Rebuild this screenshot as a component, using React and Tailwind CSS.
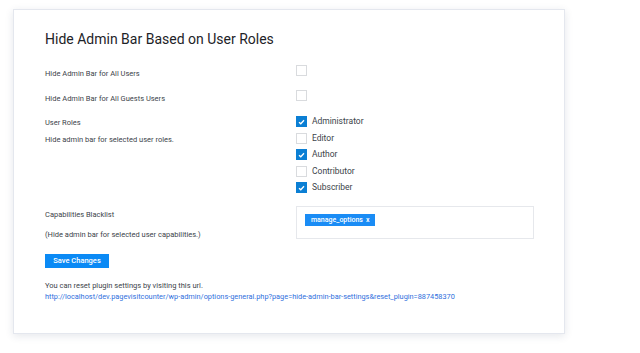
import React from "react";

const roles = [
  { name: "Administrator", checked: true },
  { name: "Editor", checked: false },
  { name: "Author", checked: true },
  { name: "Contributor", checked: false },
  { name: "Subscriber", checked: true },
];

const Box = ({ checked }) =>
  checked ? (
    <span className="w-[11px] h-[11px] bg-[#0b7fd4] flex items-center justify-center shrink-0">
      <svg width="7" height="6" viewBox="0 0 7 6">
        <path d="M1 3.2 L2.8 4.8 L6 1.2" fill="none" stroke="#fff" strokeWidth="1.3" />
      </svg>
    </span>
  ) : (
    <span className="w-[11px] h-[11px] border border-[#d9dbde] bg-white shrink-0" />
  );

const App = () => {
  return (
    <div className="w-[640px] h-[353px] bg-white pt-[9px] pl-[13px] font-['Roboto',sans-serif]">
      <div className="w-[552px] h-[325px] border border-[#e4e7ee] shadow-[0_2px_8px_rgba(40,60,90,0.12)] bg-white pl-[31px] pt-[20px]">
        <h1 className="text-[14px] leading-[18px] font-normal text-[#1d2327]">Hide Admin Bar Based on User Roles</h1>

        <div className="flex mt-[17px] h-[12px]">
          <div className="w-[251px] text-[7.5px] leading-[12px] text-[#3c434a] pt-[3px]">Hide Admin Bar for All Users</div>
          <Box checked={false} />
        </div>

        <div className="flex mt-[13px] h-[12px]">
          <div className="w-[251px] text-[7.5px] leading-[12px] text-[#3c434a] pt-[3px]">Hide Admin Bar for All Guests Users</div>
          <Box checked={false} />
        </div>

        <div className="flex mt-[14px]">
          <div className="w-[251px] text-[7.5px] leading-[12px] text-[#3c434a]">
            <div className="mt-[1px]">User Roles</div>
            <div className="mt-[5px]">Hide admin bar for selected user roles.</div>
          </div>
          <div className="flex flex-col gap-[5.5px]">
            {roles.map((r) => (
              <div key={r.name} className="flex items-center h-[11px]">
                <Box checked={r.checked} />
                <span className="ml-[5px] text-[8.5px] leading-[11px] text-[#3c434a]">{r.name}</span>
              </div>
            ))}
          </div>
        </div>

        <div className="flex mt-[13px]">
          <div className="w-[251px] text-[7.5px] leading-[12px] text-[#3c434a]">
            <div className="mt-[3px]">Capabilities Blacklist</div>
            <div className="mt-[8px]">(Hide admin bar for selected user capabilities.)</div>
          </div>
          <div className="w-[238px] h-[33px] border border-[#e6e8ec] pl-[8px] pt-[7px] flex items-start">
            <span className="flex items-center h-[12px] px-[6px] bg-[#1a8cf5] text-white text-[7px] font-medium leading-[12px]">
              manage_options <span className="ml-[3px]">x</span>
            </span>
          </div>
        </div>

        <button
          type="button"
          className="mt-[13px] w-[64px] h-[14px] bg-[#0b8af5] text-white text-[7.5px] font-medium leading-[14px] block"
        >
          Save Changes
        </button>

        <div className="mt-[12px] text-[7.5px] leading-[11px] font-normal text-[#3c434a]">
          You can reset plugin settings by visiting this url.
        </div>
        <a className="block text-[7.35px] leading-[11px] text-[#2f6fdd]">
          http://localhost/dev.pagevisitcounter/wp-admin/options-general.php?page=hide-admin-bar-settings&amp;reset_plugin=887458370
        </a>
      </div>
    </div>
  );
};

export default App;
